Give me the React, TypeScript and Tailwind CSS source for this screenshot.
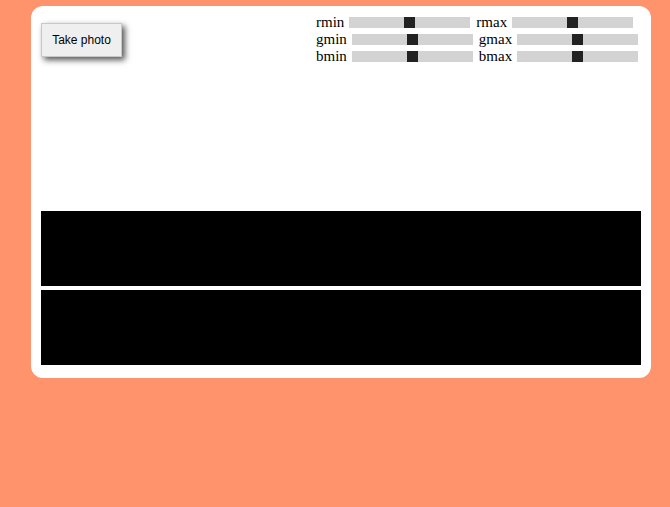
import React from 'react';

const Slider: React.FC<{ label: string; first?: boolean }> = ({ label, first }) => (
  <>
    <span className={first ? '' : 'ml-[6px]'}>{label}</span>
    <div className="relative ml-[5px] h-[11px] w-[121px] bg-[#d3d3d3]">
      <div className="absolute left-[55px] top-0 h-[11px] w-[11px] bg-[#222222]" />
    </div>
  </>
);

const rows = [
  ['rmin', 'rmax'],
  ['gmin', 'gmax'],
  ['bmin', 'bmax'],
];

const App: React.FC = () => {
  return (
    <div className="min-h-[507px] w-full bg-[#fe936c] pt-[6px] pl-[31px]">
      <div className="w-[620px] rounded-[12px] bg-white px-[10px] pt-[8px] pb-[13px]">
        <div className="flex h-[197px] items-start">
          <button className="mt-[9px] h-[34px] w-[81px] border border-[#c8c8c8] bg-[#efefef] text-[12px] text-black shadow-[3px_3px_6px_#555] font-['Liberation_Sans',Arial,sans-serif]">
            Take photo
          </button>
          <div className="ml-auto w-[325px] text-[15px] text-black font-['Liberation_Serif','Times_New_Roman',serif]">
            {rows.map(([a, b]) => (
              <div key={a} className="flex h-[17px] items-center leading-[17px]">
                <Slider label={a} first />
                <Slider label={b} />
              </div>
            ))}
          </div>
        </div>
        <div className="flex flex-col gap-[4px]">
          <div className="h-[75px] w-full bg-black" />
          <div className="h-[75px] w-full bg-black" />
        </div>
      </div>
    </div>
  );
};

export default App;
